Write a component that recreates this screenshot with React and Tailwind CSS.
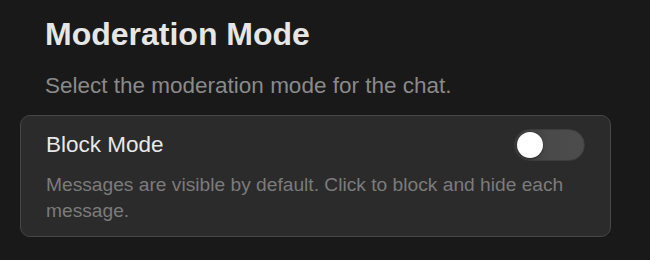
import React, { useState } from "react";

const App = () => {
  const [blockMode, setBlockMode] = useState(false);

  return (
    <div
      className="w-[650px] h-[260px] bg-[#191919] px-5 pt-[14px] overflow-hidden"
      style={{ fontFamily: '"Liberation Sans", Arial, sans-serif' }}
    >
      {/* Header */}
      <div className="pl-[25px]">
        <h2 className="text-[32px] leading-[40px] font-bold text-[#e6e6e6]">
          Moderation Mode
        </h2>
        <p className="mt-[17px] text-[22.5px] leading-[30px] text-[#8a8a8a]">
          Select the moderation mode for the chat.
        </p>
      </div>

      {/* Mode card */}
      <div className="mt-[14px] w-[591px] rounded-[10px] border border-[#474747] bg-[#2b2b2b] px-[25px] pt-[13px] pb-3">
        <div className="flex items-center justify-between h-8">
          <span className="text-[22.5px] leading-8 text-[#e8e8e8]">
            Block Mode
          </span>
          <button
            onClick={() => setBlockMode(!blockMode)}
            className={`relative w-[71px] h-8 rounded-full border border-[#3c3c3c] ${
              blockMode
                ? "bg-[#5a5a5a]"
                : "bg-gradient-to-r from-[#3a3a3a] via-[#4a4a4a] to-[#4c4c4c]"
            }`}
          >
            <span
              className={`absolute top-[2px] w-[26px] h-[26px] rounded-full bg-white shadow-[0_1px_2px_rgba(0,0,0,0.4)] ${
                blockMode ? "right-[2px]" : "left-[2px]"
              }`}
            ></span>
          </button>
        </div>
        <p className="mt-[11px] text-[19.2px] leading-[26px] text-[#7b7b7b]">
          Messages are visible by default. Click to block and hide each
          message.
        </p>
      </div>
    </div>
  );
};

export default App;
